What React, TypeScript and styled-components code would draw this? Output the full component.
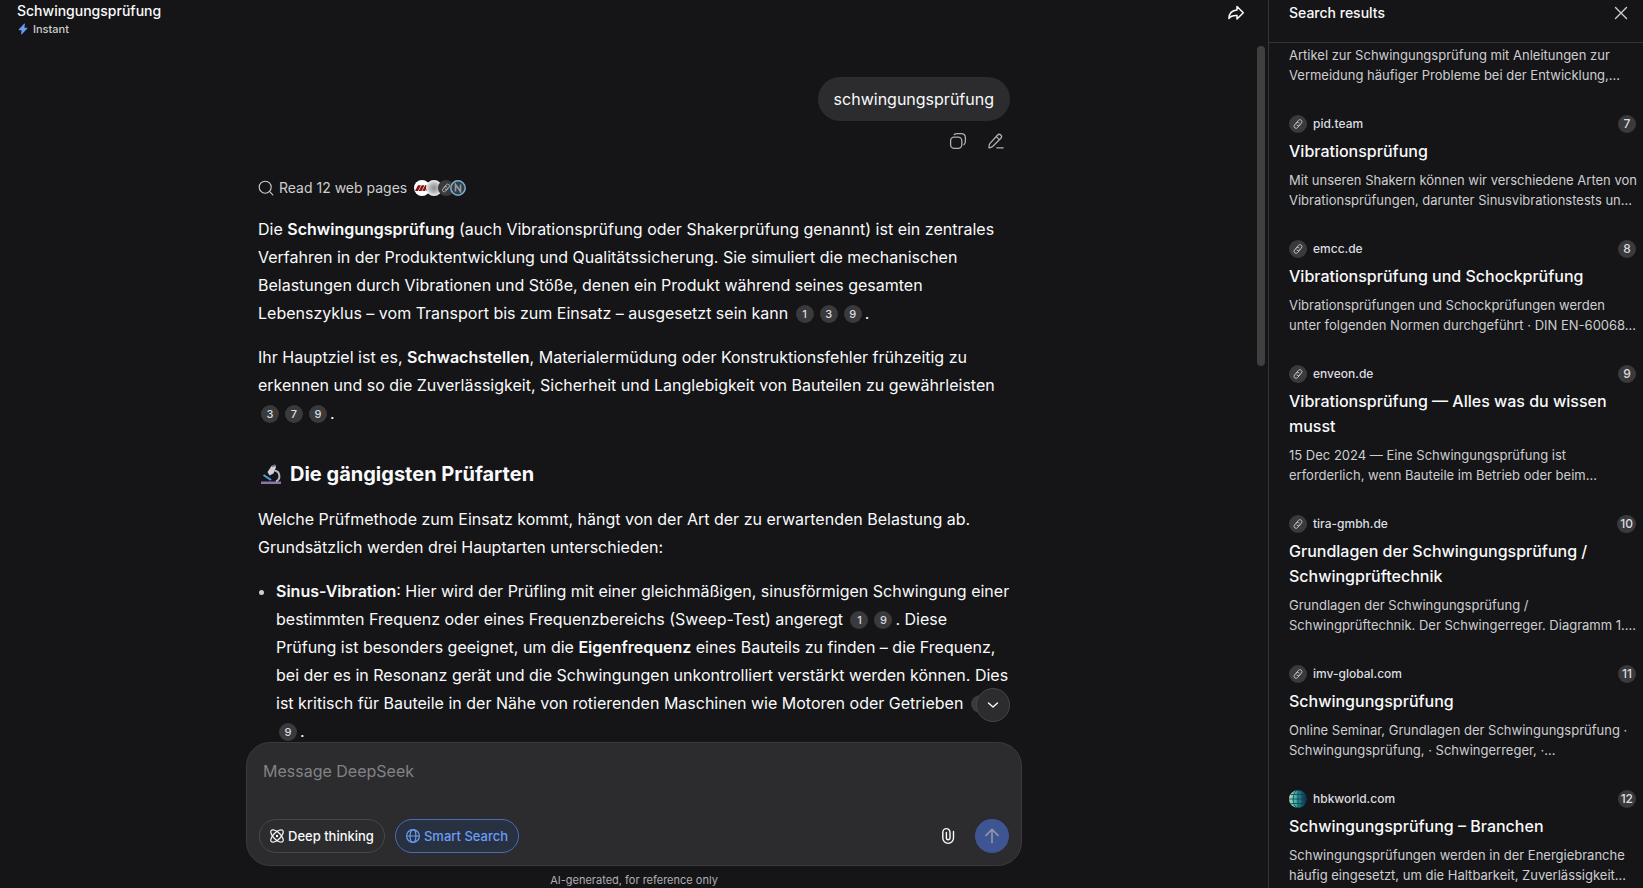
import React, { useState } from 'react';
import styled, { createGlobalStyle, css } from 'styled-components';

const GlobalStyle = createGlobalStyle`
  *, *::before, *::after { box-sizing: border-box; }
  html, body, #root { height: 100%; margin: 0; }
  body {
    background: #151517;
    color: #f9fafb;
    font-family: Inter, "Noto Sans", sans-serif;
    font-size: 16px;
    line-height: 28px;
    overflow: hidden;
  }
  h1, h2, h3, p, ul, ol { margin: 0; padding: 0; }
  button, textarea { font: inherit; color: inherit; }
  svg { display: block; flex: none; }
`;

const Page = styled.div`
  display: flex;
  height: 100vh;
`;

const Chat = styled.main`
  position: relative;
  flex: 1;
  min-width: 0;
  display: flex;
  flex-direction: column;
`;

const ChatHeader = styled.header`
  display: flex;
  justify-content: space-between;
  align-items: flex-start;
  height: 46px;
  flex: none;
  padding: 1px 20px 0 17px;
`;

const ChatTitle = styled.h1`
  font-size: 14px;
  line-height: 20px;
  font-weight: 500;
`;

const Mode = styled.div`
  display: flex;
  align-items: center;
  gap: 4px;
  font-size: 11px;
  line-height: 16px;
  font-weight: 500;
  color: #cdced1;
`;

const IconButton = styled.button<{ $tone?: string; $size?: number }>`
  display: inline-flex;
  align-items: center;
  justify-content: center;
  width: ${({ $size }) => $size ?? 24}px;
  height: ${({ $size }) => $size ?? 24}px;
  padding: 0;
  border: 0;
  border-radius: 8px;
  background: none;
  color: ${({ $tone }) => $tone ?? '#f9fafb'};
  cursor: pointer;
`;

const Scroll = styled.div`
  flex: 1;
  min-height: 0;
  overflow: hidden;
`;

const ScrollThumb = styled.div`
  position: absolute;
  top: 46px;
  right: 3px;
  width: 8px;
  height: 320px;
  border-radius: 4px;
  background: #3f3f40;
`;

const Column = styled.div`
  width: 100%;
  max-width: 752px;
  margin: 0 auto;
  padding-top: 31px;
`;

const UserMessage = styled.div`
  display: flex;
  flex-direction: column;
  align-items: flex-end;
  gap: 6px;
`;

const Bubble = styled.div`
  padding: 8px 16px;
  border-radius: 22px;
  background: #2c2c2e;
`;

const MessageActions = styled.div`
  display: flex;
  gap: 10px;
`;

const SourcesButton = styled.button`
  display: flex;
  align-items: center;
  gap: 5px;
  height: 24px;
  margin: 21px 0 15px;
  padding: 0;
  border: 0;
  background: none;
  color: #cdced1;
  font-size: 14px;
  line-height: 24px;
  cursor: pointer;
`;

const Favicons = styled.span`
  display: flex;
  margin-left: 2px;
  svg + svg { margin-left: -4px; }
`;

const Answer = styled.article`
  display: flex;
  flex-direction: column;
  gap: 16px;
  strong { font-weight: 600; }
`;

const SectionTitle = styled.h2`
  display: flex;
  align-items: center;
  gap: 8px;
  margin-top: 16px;
  padding-left: 2px;
  font-size: 20px;
  line-height: 30px;
  font-weight: 700;
`;

const Bullets = styled.ul`
  padding-left: 18px;
  li::marker { color: #cdced1; }
`;

const badge = css`
  display: inline-flex;
  align-items: center;
  justify-content: center;
  min-width: 18px;
  height: 18px;
  border-radius: 9px;
  background: #3a3a3c;
  color: #dcdde0;
  font-weight: 500;
  line-height: 18px;
`;

const Cite = styled.a`
  ${badge}
  margin: 0 3px;
  font-size: 11px;
  vertical-align: 1px;
  text-decoration: none;
`;

const ComposerWrap = styled.div`
  position: relative;
  flex: none;
  width: 100%;
  max-width: 776px;
  margin: 0 auto;
`;

const ToBottom = styled.button`
  position: absolute;
  right: 12px;
  bottom: 100%;
  margin-bottom: 20px;
  display: flex;
  align-items: center;
  justify-content: center;
  width: 34px;
  height: 34px;
  padding: 0;
  border: 1px solid #454547;
  border-radius: 50%;
  background: #2c2c2e;
  cursor: pointer;
`;

const Composer = styled.form`
  display: flex;
  flex-direction: column;
  justify-content: space-between;
  height: 124px;
  padding: 14px 12px 12px;
  border: 1px solid #3a3a3c;
  border-radius: 24px;
  background: #2c2c2e;
`;

const Input = styled.textarea`
  display: block;
  width: 100%;
  height: 28px;
  padding: 0 4px;
  border: 0;
  outline: 0;
  resize: none;
  overflow: hidden;
  background: none;
  &::placeholder { color: #818285; opacity: 1; }
`;

const Tools = styled.div`
  display: flex;
  align-items: center;
  gap: 10px;
`;

const Toggle = styled.button<{ $on?: boolean }>`
  display: flex;
  align-items: center;
  gap: 4px;
  height: 34px;
  padding: 0 10px;
  border: 1px solid ${({ $on }) => ($on ? '#4a6cb8' : '#48484a')};
  border-radius: 17px;
  background: ${({ $on }) => ($on ? '#283142' : 'transparent')};
  color: ${({ $on }) => ($on ? '#6c9cf5' : '#f9fafb')};
  font-size: 13px;
  line-height: 20px;
  font-weight: 500;
  cursor: pointer;
`;

const Spacer = styled.div`
  flex: 1;
`;

const Send = styled.button`
  display: flex;
  align-items: center;
  justify-content: center;
  width: 34px;
  height: 34px;
  margin-left: 3px;
  padding: 0;
  border: 0;
  border-radius: 50%;
  background: #3f5591;
  color: #8a93ad;
`;

const Disclaimer = styled.p`
  flex: none;
  padding-top: 6px;
  font-size: 11px;
  line-height: 16px;
  text-align: center;
  color: #adafb3;
`;

const Panel = styled.aside`
  flex: none;
  display: flex;
  flex-direction: column;
  width: 375px;
  border-left: 1px solid #343436;
`;

const PanelHeader = styled.header`
  flex: none;
  display: flex;
  justify-content: space-between;
  align-items: flex-start;
  height: 43px;
  padding: 1px 10px 0 20px;
  border-bottom: 1px solid #343436;
`;

const PanelTitle = styled.h2`
  font-size: 14px;
  line-height: 24px;
  font-weight: 500;
`;

const Results = styled.ol`
  flex: 1;
  min-height: 0;
  overflow: hidden;
  display: flex;
  flex-direction: column;
  gap: 30px;
  padding: 2px 6px 0 20px;
  list-style: none;
`;

const Result = styled.li`
  display: flex;
  flex: none;
  flex-direction: column;
  gap: 6px;
`;

const Source = styled.div`
  display: flex;
  align-items: center;
  gap: 6px;
  height: 18px;
  padding-right: 1px;
  font-size: 12px;
  line-height: 18px;
  font-weight: 500;
  color: #dcdde0;
`;

const Rank = styled.span`
  ${badge}
  margin-left: auto;
  padding: 0 3px;
  font-size: 12px;
`;

const ResultTitle = styled.a`
  font-size: 16px;
  line-height: 25px;
  font-weight: 500;
  color: #f9fafb;
  text-decoration: none;
`;

const Snippet = styled.p`
  font-size: 13px;
  line-height: 20px;
  color: #cdced1;
`;

const stroke = {
  fill: 'none',
  stroke: 'currentColor',
  strokeLinecap: 'round' as const,
  strokeLinejoin: 'round' as const,
};

const BoltIcon = () => (
  <svg width="12" height="12" viewBox="0 0 12 12" aria-hidden="true">
    <path d="M7.4.6 1.700 6.600c-.2.3-.1.6.3.6h2.600l-.5 4c0 .3.3.4.5.2l5.700-6c.2-.3.1-.6-.3-.6H7.400L7.900.8c0-.3-.3-.4-.5-.2Z" fill="#6c9cf5" />
  </svg>
);

const ShareIcon = () => (
  <svg width="18" height="18" viewBox="0 0 18 18" {...stroke} strokeWidth="1.5" aria-hidden="true">
    <path d="M10 2.5 16.3 8.800 10 15v-3.600C6 11.200 3.600 12 1.900 14.500 2.100 9.800 4.800 6.300 10 6Z" />
  </svg>
);

const CopyIcon = () => (
  <svg width="18" height="18" viewBox="0 0 18 18" {...stroke} strokeWidth="1.3" aria-hidden="true">
    <rect x="1.6" y="5.2" width="11.2" height="11.2" rx="3.6" />
    <path d="M5.300 2.500C6 1.900 6.900 1.600 8 1.600h4c2.700 0 4.400 1.700 4.400 4.400v3c0 1.700-.5 2.900-1.500 3.700" />
  </svg>
);

const PencilIcon = () => (
  <svg width="18" height="18" viewBox="0 0 18 18" {...stroke} strokeWidth="1.3" aria-hidden="true">
    <path d="M2 15.800c0-2 .2-3.300.8-4.200L10.600 3a2.300 2.300 0 0 1 3.300 3.200l-8.300 8.300c-.9.800-2 1.200-3.600 1.300ZM9.300 4.600l3 3M9.800 15.800h6.400" />
  </svg>
);

const SearchIcon = () => (
  <svg width="16" height="16" viewBox="0 0 16 16" {...stroke} strokeWidth="1.1" aria-hidden="true">
    <circle cx="7.2" cy="7.2" r="6" />
    <path d="m11.700 11.700 3.100 3.100" />
  </svg>
);

const LinkIcon = ({ size = 18 }: { size?: number }) => (
  <svg width={size} height={size} viewBox="0 0 18 18" aria-hidden="true">
    <circle cx="9" cy="9" r="9" fill="#3a3a3c" />
    <g {...stroke} stroke="#c4c5c8" strokeWidth=".9" transform="rotate(-50 9 9)">
      <path d="M9.600 11H6a2 2 0 0 1 0-4h2.600a2 2 0 0 1 2 2" />
      <path d="M8.400 7H12a2 2 0 0 1 0 4H9.400a2 2 0 0 1-2-2" />
    </g>
  </svg>
);

const GlobeFavicon = () => (
  <svg width="18" height="18" viewBox="0 0 18 18" aria-hidden="true">
    <defs>
      <linearGradient id="globe" x1="0" x2="1">
        <stop offset="0" stopColor="#b5dccf" />
        <stop offset=".35" stopColor="#45b5a5" />
        <stop offset=".65" stopColor="#15708a" />
        <stop offset="1" stopColor="#12203c" />
      </linearGradient>
    </defs>
    <circle cx="9" cy="9" r="9" fill="url(#globe)" />
    <g fill="none" stroke="#15404d" strokeWidth=".8">
      <path d="M9 0v18M0 9h18M2 4.500h14M2 13.500h14" />
      <ellipse cx="9" cy="9" rx="4.800" ry="9" />
    </g>
  </svg>
);

const StripesFavicon = () => (
  <svg width="16" height="16" viewBox="0 0 16 16" aria-hidden="true">
    <circle cx="8" cy="8" r="8" fill="#fff" />
    <path d="M1 11 4 5.200h3L4 11ZM4.700 11l3-5.800h2.800l-3 5.800ZM8.200 11l3-5.800H14V11h-2.300l.2-2-1.100 2Z" fill="#861212" />
  </svg>
);

const DotFavicon = () => (
  <svg width="16" height="16" viewBox="0 0 16 16" aria-hidden="true">
    <defs>
      <radialGradient id="dot">
        <stop offset="0" stopColor="#8d8d8d" />
        <stop offset=".6" stopColor="#bdbdbd" />
        <stop offset="1" stopColor="#f1f1f1" />
      </radialGradient>
    </defs>
    <circle cx="8" cy="8" r="8" fill="url(#dot)" />
  </svg>
);

const RingFavicon = () => (
  <svg width="16" height="16" viewBox="0 0 16 16" aria-hidden="true">
    <circle cx="8" cy="8" r="7.2" fill="#2f3e49" stroke="#7fb0cd" strokeWidth="1.5" />
    <path d="M5.500 11.500v-7l5 7v-7" fill="none" stroke="#959ca1" strokeWidth="1.6" />
  </svg>
);

const MicroscopeIcon = () => (
  <svg width="22" height="22" viewBox="0 0 22 22" aria-hidden="true">
    <path d="M1 18.500h20V21H1Z" fill="#8c74a8" />
    <path d="M14.500 7.500a5.800 5.800 0 0 1 1.500 11" fill="none" stroke="#b9b2c2" strokeWidth="2" />
    <path d="m3.500 12 7.500 5" stroke="#4aa3dc" strokeWidth="2" />
    <path d="m11.500 3 3.500-1.200 1 2.200-2.500 6.500-4 2-2-3.500Z" fill="#d3ced9" />
    <path d="m12 3 3-1.800.8 1.800-3.500 1.200Z" fill="#77717f" />
  </svg>
);

const AtomIcon = () => (
  <svg width="14" height="14" viewBox="0 0 14 14" {...stroke} strokeWidth="1.2" aria-hidden="true">
    <ellipse cx="7" cy="7" rx="8" ry="3.6" transform="rotate(45 7 7)" />
    <ellipse cx="7" cy="7" rx="8" ry="3.6" transform="rotate(-45 7 7)" />
    <circle cx="7" cy="7" r=".6" fill="currentColor" />
  </svg>
);

const GlobeIcon = () => (
  <svg width="14" height="14" viewBox="0 0 14 14" {...stroke} strokeWidth="1.2" aria-hidden="true">
    <circle cx="7" cy="7" r="6.4" />
    <ellipse cx="7" cy="7" rx="2.9" ry="6.4" />
    <path d="M.6 7h12.800" />
  </svg>
);

const ClipIcon = () => (
  <svg width="18" height="18" viewBox="0 0 18 18" {...stroke} strokeWidth="1.4" aria-hidden="true">
    <path d="M14.500 4.500v6.500a5.300 5.300 0 0 1-10.700 0V5.200a3.600 3.600 0 0 1 7.200 0V11a1.800 1.800 0 0 1-3.600 0V5.500" />
  </svg>
);

const ArrowUpIcon = () => (
  <svg width="16" height="16" viewBox="0 0 16 16" {...stroke} strokeWidth="1.7" aria-hidden="true">
    <path d="M8 14.500v-13M2 7.300l6-6 6 6" />
  </svg>
);

const ChevronIcon = () => (
  <svg width="12" height="12" viewBox="0 0 12 12" {...stroke} strokeWidth="1.4" aria-hidden="true">
    <path d="m1.500 4 4.500 4 4.500-4" />
  </svg>
);

const CloseIcon = () => (
  <svg width="14" height="14" viewBox="0 0 14 14" {...stroke} strokeWidth="1.4" aria-hidden="true">
    <path d="m1.500 1.500 11 11M12.500 1.500l-11 11" />
  </svg>
);

type ResultData = { n: number; host: string; title: string; text: string; globe?: boolean };

const results: ResultData[] = [
  { n: 7, host: 'pid.team', title: 'Vibrationsprüfung', text: 'Mit unseren Shakern können wir verschiedene Arten von Vibrationsprüfungen, darunter Sinusvibrationstests un...' },
  { n: 8, host: 'emcc.de', title: 'Vibrationsprüfung und Schockprüfung', text: 'Vibrationsprüfungen und Schockprüfungen werden unter folgenden Normen durchgeführt · DIN EN-60068...' },
  { n: 9, host: 'enveon.de', title: 'Vibrationsprüfung — Alles was du wissen musst', text: '15 Dec 2024 — Eine Schwingungsprüfung ist erforderlich, wenn Bauteile im Betrieb oder beim...' },
  { n: 10, host: 'tira-gmbh.de', title: 'Grundlagen der Schwingungsprüfung / Schwingprüftechnik', text: 'Grundlagen der Schwingungsprüfung / Schwingprüftechnik. Der Schwingerreger. Diagramm 1....' },
  { n: 11, host: 'imv-global.com', title: 'Schwingungsprüfung', text: 'Online Seminar, Grundlagen der Schwingungsprüfung · Schwingungsprüfung, · Schwingerreger, ·...' },
  { n: 12, host: 'hbkworld.com', title: 'Schwingungsprüfung – Branchen', text: 'Schwingungsprüfungen werden in der Energiebranche häufig eingesetzt, um die Haltbarkeit, Zuverlässigkeit...', globe: true },
];

const C = ({ n }: { n: number }) => <Cite href={`#source-${n}`}>{n}</Cite>;

export default function App() {
  const [message, setMessage] = useState('');
  return (
    <Page>
      <GlobalStyle />
      <Chat>
        <ChatHeader>
          <div>
            <ChatTitle>Schwingungsprüfung</ChatTitle>
            <Mode><BoltIcon />Instant</Mode>
          </div>
          <IconButton aria-label="Share"><ShareIcon /></IconButton>
        </ChatHeader>
        <Scroll>
          <Column>
            <UserMessage>
              <Bubble>schwingungsprüfung</Bubble>
              <MessageActions>
                <IconButton $size={28} $tone="#adafb3" aria-label="Copy"><CopyIcon /></IconButton>
                <IconButton $size={28} $tone="#adafb3" aria-label="Edit"><PencilIcon /></IconButton>
              </MessageActions>
            </UserMessage>
            <SourcesButton>
              <SearchIcon />
              Read 12 web pages
              <Favicons>
                <StripesFavicon />
                <DotFavicon />
                <LinkIcon size={16} />
                <RingFavicon />
              </Favicons>
            </SourcesButton>
            <Answer>
              <p>
                Die <strong>Schwingungsprüfung</strong> (auch Vibrationsprüfung oder Shakerprüfung genannt) ist ein
                zentrales Verfahren in der Produktentwicklung und Qualitätssicherung. Sie simuliert die mechanischen
                Belastungen durch Vibrationen und Stöße, denen ein Produkt während seines gesamten Lebenszyklus – vom
                Transport bis zum Einsatz – ausgesetzt sein kann <C n={1} /><C n={3} /><C n={9} />.
              </p>
              <p>
                Ihr Hauptziel ist es, <strong>Schwachstellen</strong>, Materialermüdung oder Konstruktionsfehler
                frühzeitig zu erkennen und so die Zuverlässigkeit, Sicherheit und Langlebigkeit von Bauteilen zu
                gewährleisten <C n={3} /><C n={7} /><C n={9} />.
              </p>
              <SectionTitle><MicroscopeIcon />Die gängigsten Prüfarten</SectionTitle>
              <p>
                Welche Prüfmethode zum Einsatz kommt, hängt von der Art der zu erwartenden Belastung ab. Grundsätzlich
                werden drei Hauptarten unterschieden:
              </p>
              <Bullets>
                <li>
                  <strong>Sinus-Vibration</strong>: Hier wird der Prüfling mit einer gleichmäßigen, sinusförmigen
                  Schwingung einer bestimmten Frequenz oder eines Frequenzbereichs (Sweep-Test)
                  angeregt <C n={1} /><C n={9} />. Diese Prüfung ist besonders geeignet, um
                  die <strong>Eigenfrequenz</strong> eines Bauteils zu finden – die Frequenz, bei der es in Resonanz
                  gerät und die Schwingungen unkontrolliert verstärkt werden können. Dies ist kritisch für Bauteile in
                  der Nähe von rotierenden Maschinen wie Motoren oder Getrieben <C n={1} /><C n={9} />.
                </li>
              </Bullets>
            </Answer>
          </Column>
        </Scroll>
        <ScrollThumb />
        <ComposerWrap>
          <ToBottom aria-label="Scroll to bottom"><ChevronIcon /></ToBottom>
          <Composer onSubmit={(e) => e.preventDefault()}>
            <Input
              aria-label="Message DeepSeek"
              placeholder="Message DeepSeek"
              rows={1}
              value={message}
              onChange={(e) => setMessage(e.target.value)}
            />
            <Tools>
              <Toggle type="button" aria-pressed="false"><AtomIcon />Deep thinking</Toggle>
              <Toggle type="button" aria-pressed="true" $on><GlobeIcon />Smart Search</Toggle>
              <Spacer />
              <IconButton type="button" $size={28} aria-label="Attach file"><ClipIcon /></IconButton>
              <Send type="submit" aria-label="Send"><ArrowUpIcon /></Send>
            </Tools>
          </Composer>
        </ComposerWrap>
        <Disclaimer>AI-generated, for reference only</Disclaimer>
      </Chat>
      <Panel>
        <PanelHeader>
          <PanelTitle>Search results</PanelTitle>
          <IconButton $tone="#cdced1" aria-label="Close"><CloseIcon /></IconButton>
        </PanelHeader>
        <Results>
          <Result>
            <Snippet>
              Artikel zur Schwingungsprüfung mit Anleitungen zur Vermeidung häufiger Probleme bei der Entwicklung,...
            </Snippet>
          </Result>
          {results.map((r) => (
            <Result key={r.n} id={`source-${r.n}`}>
              <Source>
                {r.globe ? <GlobeFavicon /> : <LinkIcon />}
                {r.host}
                <Rank>{r.n}</Rank>
              </Source>
              <ResultTitle href={`https://${r.host}`}>{r.title}</ResultTitle>
              <Snippet>{r.text}</Snippet>
            </Result>
          ))}
        </Results>
      </Panel>
    </Page>
  );
}
